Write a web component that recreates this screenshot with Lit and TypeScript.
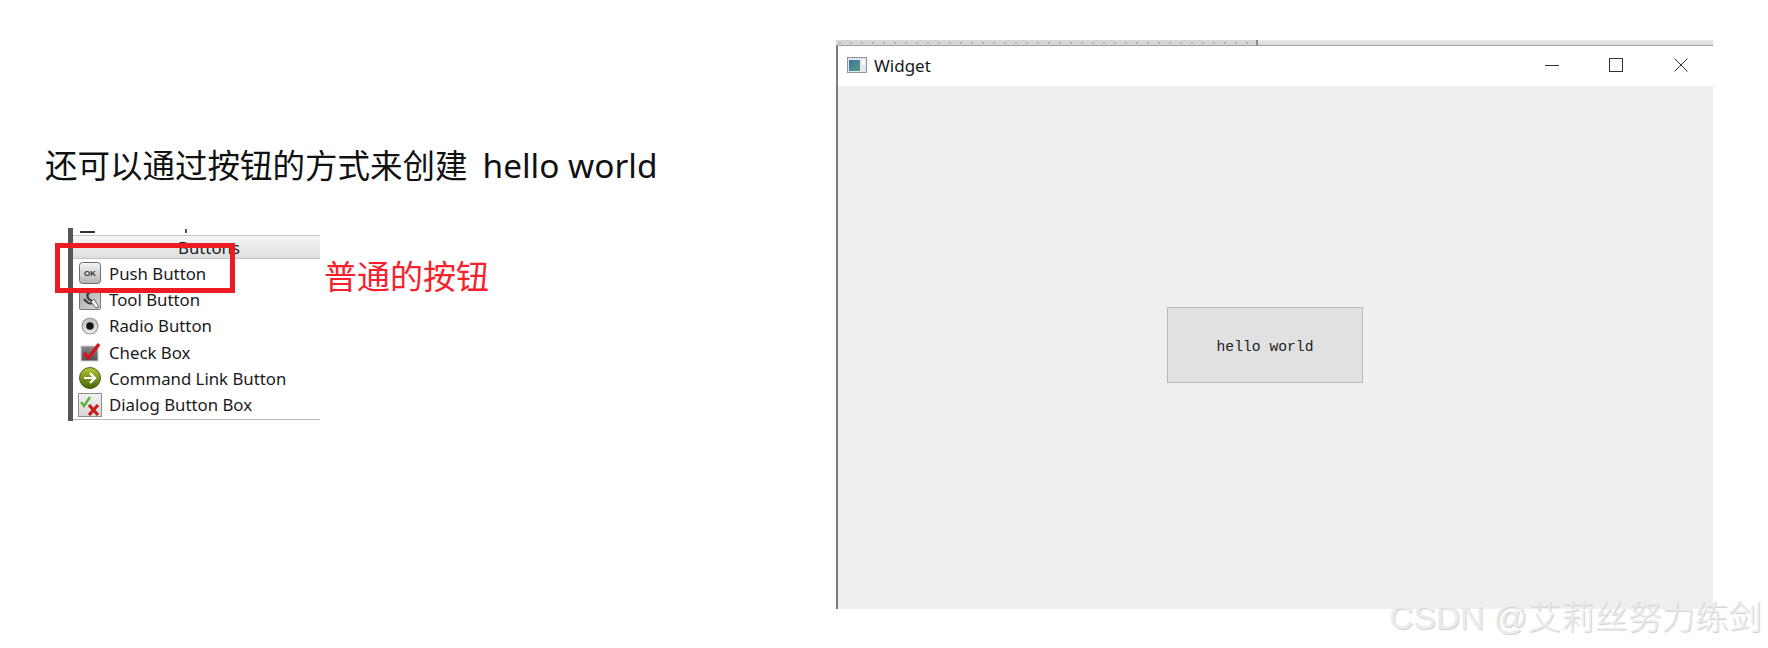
import { LitElement, html, css } from 'lit';
import { customElement } from 'lit/decorators.js';

const okIcon = html`<svg viewBox="0 0 22 22" width="22" height="22">
  <defs><linearGradient id="ok" x1="0" y1="0" x2="0" y2="1"><stop offset="0" stop-color="#f6f6f6"/><stop offset="1" stop-color="#b4b4b4"/></linearGradient></defs>
  <rect x="0.500" y="0.500" width="21" height="21" rx="3" fill="url(#ok)" stroke="#6f6f6f"/>
  <text x="11" y="14" text-anchor="middle" font-family="'Liberation Sans', sans-serif" font-size="8" font-weight="700" fill="#333">OK</text>
</svg>`;

const toolIcon = html`<svg viewBox="0 0 22 22" width="22" height="22">
  <defs><linearGradient id="tool" x1="0" y1="0" x2="1" y2="1"><stop offset="0" stop-color="#a8a8a8"/><stop offset="1" stop-color="#d8d8d8"/></linearGradient></defs>
  <rect x="0.500" y="0.500" width="21" height="21" rx="1" fill="url(#tool)" stroke="#777"/>
  <path d="M15 4c-5-1-8 2-6 6 1 2 4 2 4 4s-3 2-5 0l-3-3" fill="none" stroke="#3c3c3c" stroke-width="2.200"/>
  <path d="M15 11l5 8-3 1-5-6z" fill="#f2f2f2" stroke="#666"/>
</svg>`;

const radioIcon = html`<svg viewBox="0 0 22 22" width="22" height="22">
  <defs><linearGradient id="radio" x1="0" y1="0" x2="0" y2="1"><stop offset="0" stop-color="#bcbcbc"/><stop offset="1" stop-color="#ededed"/></linearGradient></defs>
  <circle cx="11" cy="11" r="8" fill="url(#radio)" stroke="#9a9a9a" stroke-width="1.200"/>
  <circle cx="11" cy="11" r="3.800" fill="#161616"/>
</svg>`;

const checkIcon = html`<svg viewBox="0 0 24 22" width="24" height="22">
  <defs><linearGradient id="chk" x1="0" y1="0" x2="0" y2="1"><stop offset="0" stop-color="#8d8d8d"/><stop offset="1" stop-color="#4f4f4f"/></linearGradient></defs>
  <rect x="3" y="5" width="17" height="15" fill="url(#chk)" stroke="#d0d0d0"/>
  <path d="M6 12l4.500 5 10.500-14" fill="none" stroke="#cf1720" stroke-width="3.400" stroke-linejoin="round"/>
</svg>`;

const linkIcon = html`<svg viewBox="0 0 22 22" width="22" height="22">
  <defs><linearGradient id="lnk" x1="0" y1="0" x2="0" y2="1"><stop offset="0" stop-color="#b4c838"/><stop offset="1" stop-color="#486407"/></linearGradient></defs>
  <circle cx="11" cy="11" r="10.500" fill="url(#lnk)" stroke="#55651a"/>
  <path d="M5 11h10.500M11 6l5 5-5 5" fill="none" stroke="#fff" stroke-width="2.200"/>
</svg>`;

const dialogIcon = html`<svg viewBox="0 0 24 24" width="24" height="24">
  <defs><linearGradient id="dlg" x1="0" y1="0" x2="0" y2="1"><stop offset="0" stop-color="#f2f2f2"/><stop offset="1" stop-color="#d6d6d6"/></linearGradient></defs>
  <rect x="0.500" y="0.500" width="23" height="23" fill="url(#dlg)" stroke="#8c8c8c"/>
  <path d="M3 9l3 4 6-9" fill="none" stroke="#57b536" stroke-width="2.400"/>
  <path d="M11 12l9 10M20 12l-9 10" fill="none" stroke="#c91a1a" stroke-width="3.200"/>
</svg>`;

const rows = [
  { label: 'Push Button', icon: okIcon },
  { label: 'Tool Button', icon: toolIcon },
  { label: 'Radio Button', icon: radioIcon },
  { label: 'Check Box', icon: checkIcon },
  { label: 'Command Link Button', icon: linkIcon },
  { label: 'Dialog Button Box', icon: dialogIcon },
];

@customElement('app-root')
export class AppRoot extends LitElement {
  static styles = css`
    :host {
      display: block;
      position: relative;
      width: 1768px;
      height: 648px;
      overflow: hidden;
      background: #fff;
      font-family: 'Noto Sans', 'Noto Sans CJK SC', sans-serif;
    }

    .page {
      display: flex;
      height: 100%;
    }

    .left {
      width: 836px;
      padding-top: 145px;
      box-sizing: border-box;
    }

    .heading {
      height: 40px;
      margin: 0 0 43px 45px;
      font-family: 'Noto Sans', 'Noto Sans CJK SC', sans-serif;
      font-size: 32.500px;
      font-weight: 400;
      line-height: 40px;
      color: #111;
      white-space: nowrap;
    }

    .heading__latin {
      margin-left: 15px;
      font-size: 33.400px;
    }

    .demo {
      display: flex;
      margin-left: 68px;
    }

    .palette {
      position: relative;
      width: 252px;
      height: 193px;
      box-sizing: border-box;
      border-left: 5px solid #555;
    }

    .palette__clip {
      height: 7px;
      position: relative;
    }

    .palette__clip i {
      position: absolute;
      top: 3px;
      left: 7px;
      width: 15px;
      height: 2px;
      background: #333;
    }

    .palette__clip b {
      position: absolute;
      top: 1px;
      left: 112px;
      width: 2px;
      height: 4px;
      background: #555;
    }

    .palette__header {
      height: 24px;
      box-sizing: border-box;
      border-top: 1px solid #c4c4c4;
      border-bottom: 1px solid #c4c4c4;
      background: linear-gradient(#f6f6f6, #dedede);
      padding-left: 105px;
      font-size: 16.800px;
      line-height: 24px;
      color: #222;
    }

    .palette__list {
      border-bottom: 1px solid #bbb;
      padding: 1px 0 1px;
    }

    .palette__row {
      display: flex;
      align-items: center;
      height: 26.300px;
      padding-left: 5px;
      font-size: 16.800px;
      color: #1a1a1a;
      white-space: nowrap;
    }

    .palette__icon {
      width: 24px;
      margin-right: 7px;
      display: flex;
      justify-content: center;
    }

    .highlight {
      position: absolute;
      left: -18px;
      top: 15px;
      width: 180px;
      height: 50px;
      box-sizing: border-box;
      border: 5px solid #ed1c24;
    }

    .note {
      margin: 29px 0 0 4px;
      font-family: 'Noto Sans CJK SC', sans-serif;
      font-size: 33px;
      line-height: 36px;
      color: #f5222d;
    }

    .right {
      width: 877px;
      padding-top: 40px;
    }

    .strip {
      display: flex;
      height: 6px;
      box-sizing: border-box;
      background: linear-gradient(#e8e8e8, #dcdcdc);
      border-bottom: 1px solid #a0a0a0;
    }

    .strip__ruler {
      width: 422px;
      box-sizing: border-box;
      border-right: 2px solid #8a8a8a;
      background-color: #d6d6d6;
      background-image: linear-gradient(90deg, #b4b4b4 2px, transparent 2px);
      background-size: 11px 2px;
      background-position: 3px 2px;
      background-repeat: repeat-x;
    }

    .window {
      height: 563px;
      display: flex;
      flex-direction: column;
      border-left: 2px solid #7c7c7c;
      box-sizing: border-box;
      background: #efefef;
    }

    .titlebar {
      height: 40px;
      flex: none;
      display: flex;
      align-items: center;
      background: #fff;
      padding: 0 0 2px 9px;
      box-sizing: border-box;
      font-size: 17px;
      color: #1a1a1a;
    }

    .titlebar__title {
      margin-left: 7px;
      flex: 1;
    }

    .titlebar__btn {
      width: 64.500px;
      display: flex;
      justify-content: center;
    }

    .content {
      flex: 1;
      display: flex;
      align-items: flex-start;
      padding: 221px 0 0 329px;
    }

    .push {
      width: 196px;
      height: 76px;
      box-sizing: border-box;
      border: 1px solid #bbb;
      background: #e1e1e1;
      padding-top: 3px;
      display: flex;
      align-items: center;
      justify-content: center;
      font-family: 'Liberation Mono', monospace;
      font-size: 14.700px;
      color: #222;
    }

    .watermark {
      position: absolute;
      right: 6px;
      bottom: 8px;
      font-family: 'Liberation Sans', 'Noto Sans CJK SC', sans-serif;
      font-size: 33.500px;
      font-weight: 300;
      line-height: 44px;
      color: #ececec;
      text-shadow: 1px 1px 1px #cdcdcd;
      white-space: nowrap;
    }
  `;

  render() {
    return html`
      <div class="page">
        <div class="left">
          <h1 class="heading">还可以通过按钮的方式来创建<span class="heading__latin">hello world</span></h1>
          <div class="demo">
            <div class="palette">
              <div class="palette__clip"><i></i><b></b></div>
              <div class="palette__header">Buttons</div>
              <div class="palette__list">
                ${rows.map(r => html`
                  <div class="palette__row">
                    <span class="palette__icon">${r.icon}</span>
                    <span>${r.label}</span>
                  </div>
                `)}
              </div>
              <div class="highlight"></div>
            </div>
            <div class="note">普通的按钮</div>
          </div>
        </div>
        <div class="right">
          <div class="strip"><div class="strip__ruler"></div></div>
          <div class="window">
            <div class="titlebar">
              <svg viewBox="0 0 20 16" width="20" height="16">
                <defs><linearGradient id="win" x1="0" y1="0" x2="1" y2="1"><stop offset="0" stop-color="#3b6fa8"/><stop offset="1" stop-color="#4fa27a"/></linearGradient></defs>
                <rect x="0.500" y="0.500" width="19" height="15" fill="#e4e8ea" stroke="#8c979c"/>
                <rect x="2" y="3" width="11" height="11" fill="url(#win)"/>
                <rect x="15" y="3" width="3" height="5" fill="#fff"/>
              </svg>
              <span class="titlebar__title">Widget</span>
              <span class="titlebar__btn">
                <svg viewBox="0 0 14 14" width="14" height="14"><path d="M0 7.500h14" stroke="#333" fill="none"/></svg>
              </span>
              <span class="titlebar__btn">
                <svg viewBox="0 0 14 14" width="14" height="14"><rect x="0.500" y="0.500" width="13" height="13" stroke="#333" fill="none"/></svg>
              </span>
              <span class="titlebar__btn">
                <svg viewBox="0 0 14 14" width="14" height="14"><path d="M0.500 0.500l13 13M13.500 0.500l-13 13" stroke="#333" fill="none"/></svg>
              </span>
            </div>
            <div class="content">
              <div class="push">hello world</div>
            </div>
          </div>
        </div>
      </div>
      <div class="watermark">CSDN @艾莉丝努力练剑</div>
    `;
  }
}
